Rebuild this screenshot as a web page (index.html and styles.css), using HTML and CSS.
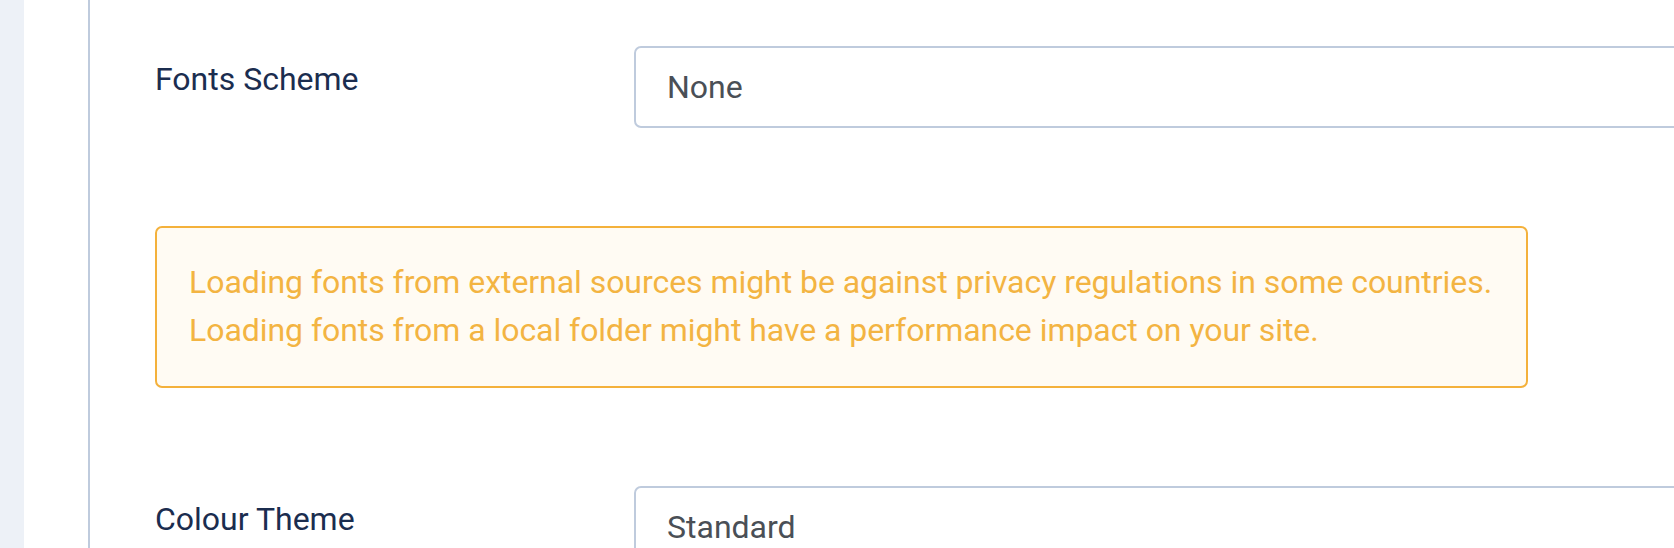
FILE: index.html
```html
<!DOCTYPE html>
<html>
<head>
<meta charset="utf-8">
<link rel="stylesheet" href="styles.css">
</head>
<body>
<div class="page">
  <div class="side"></div>
  <div class="gutter"></div>
  <div class="content">
    <div class="row">
      <div class="label">Fonts Scheme</div>
      <div class="field"><div class="select">None</div></div>
    </div>
    <div class="alert">
      <div class="alert-line">Loading fonts from external sources might be against privacy regulations in some countries.</div>
      <div class="alert-line">Loading fonts from a local folder might have a performance impact on your site.</div>
    </div>
    <div class="row">
      <div class="label">Colour Theme</div>
      <div class="field"><div class="select">Standard</div></div>
    </div>
  </div>
</div>
</body>
</html>
```
FILE: styles.css
```css
html, body {
  margin: 0;
  padding: 0;
  background: #ffffff;
  overflow: hidden;
}
body {
  width: 1674px;
  height: 548px;
  font-family: Roboto, "Liberation Sans", sans-serif;
  font-size: 32px;
  line-height: 48px;
}
.page {
  display: flex;
  height: 548px;
}
.side {
  width: 24px;
  flex: none;
  background: #edf1f7;
}
.gutter {
  width: 64px;
  flex: none;
  border-right: 2px solid #bfcbdd;
}
.content {
  flex: 1;
  min-width: 0;
  padding: 46px 0 0 65px;
  overflow: hidden;
}
.row {
  display: flex;
  align-items: flex-start;
}
.label {
  width: 479px;
  flex: none;
  padding-top: 9px;
  color: #1b2d4f;
}
.field {
  flex: none;
  width: 1200px;
}
.select {
  border: 2px solid #bfcbdd;
  border-radius: 7px;
  padding: 15px 31px;
  color: #4a4f56;
  background: #fff;
}
.alert {
  width: 1305px;
  margin: 98px 0 98px 0;
  padding: 30px 32px 32px 32px;
  border: 2px solid #f4b13b;
  border-radius: 7px;
  background: #fffbf3;
  color: #f3b442;
  letter-spacing: -0.05px;
}
.alert-line {
  white-space: nowrap;
}
```
